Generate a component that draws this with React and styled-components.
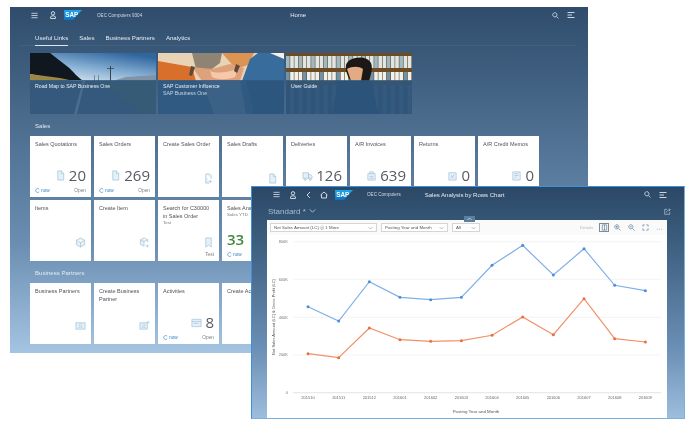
import React from "react";
import styled, { createGlobalStyle } from "styled-components";

const GlobalStyle = createGlobalStyle`
  html, body {
    margin: 0;
    background: #fff;
    font-family: "Liberation Sans", Arial, sans-serif;
  }
`;

const Stage = styled.div`
  position: relative;
  width: 694px;
  height: 443px;
  padding: 7px 0 0 10px;
  box-sizing: border-box;
  overflow: hidden;
  background: #fff;
  filter: blur(0.4px);
`;

const HomeWindow = styled.div`
  width: 578px;
  height: 346px;
  background: linear-gradient(180deg, #2f4c6c 0%, #4a6b8c 32%, #6a8db1 68%, #a4c4e2 100%);
`;

const ShellBar = styled.div`
  height: 16px;
  display: flex;
  align-items: center;
  color: #dfe7ee;
  padding-left: ${(p) => p.$left}px;
`;

const ShellIcon = styled.svg`
  width: ${(p) => p.$size || 8}px;
  height: ${(p) => p.$size || 8}px;
  margin-left: ${(p) => p.$gap || 0}px;
  flex: none;
  fill: none;
  stroke: #dfe7ee;
  stroke-width: 0.9;
`;

const Company = styled.span`
  font-size: 4.6px;
  color: #cfdae4;
  margin-left: ${(p) => p.$left}px;
`;

const ShellTitle = styled.span`
  font-size: 6px;
  color: #e6ecf2;
  margin-left: ${(p) => p.$left}px;
  white-space: nowrap;
`;

const ShellRight = styled.div`
  margin-left: auto;
  margin-right: ${(p) => p.$right}px;
  display: flex;
  align-items: center;
  gap: 8px;
`;

const TabBar = styled.div`
  margin: 8px 12px 0 10px;
  padding-left: 15px;
  height: 15px;
  display: flex;
  gap: 11px;
  box-shadow: inset 0 -1px 0 rgba(255, 255, 255, 0.06);
`;

const Tab = styled.div`
  height: 15px;
  box-sizing: border-box;
  padding-top: 3px;
  font-size: 6.1px;
  line-height: 8px;
  color: #e4ebf2;
  border-bottom: 1px solid ${(p) => (p.$active ? "#dce5ee" : "transparent")};
`;

const Banners = styled.div`
  display: flex;
  gap: 2px;
  margin: 7px 0 0 20px;
`;

const Banner = styled.div`
  position: relative;
  width: 126px;
  height: 61px;
  overflow: hidden;
  background: #365a7e;
`;

const BannerPicture = styled.svg`
  display: block;
  width: 126px;
  height: 61px;
`;

const BannerCaption = styled.div`
  position: absolute;
  left: 0;
  right: 0;
  bottom: 0;
  height: 34px;
  padding: 3px 5px;
  box-sizing: border-box;
  background: rgba(47, 87, 126, 0.84);
  color: #e8eef4;
  font-size: 5.2px;
  line-height: 7px;
`;

const BannerSub = styled.div`
  color: #c7d5e2;
`;

const SectionTitle = styled.div`
  height: ${(p) => p.$height}px;
  padding: ${(p) => p.$top}px 0 0 25px;
  box-sizing: border-box;
  font-size: 6.1px;
  line-height: 8px;
  color: #e2e9f0;
`;

const TileGrid = styled.div`
  display: grid;
  grid-template-columns: repeat(8, 61px);
  grid-auto-rows: 61px;
  gap: 3px;
  margin-left: 20px;
`;

const TileBox = styled.div`
  background: #fff;
  padding: 4px 5px 3px;
  box-sizing: border-box;
  display: flex;
  flex-direction: column;
  color: #4d5358;
  font-size: 5.5px;
  line-height: 8px;
  overflow: hidden;
`;

const TileSub = styled.div`
  font-size: 4.4px;
  line-height: 6px;
  color: #777;
`;

const TileBody = styled.div`
  margin-top: auto;
  display: flex;
  align-items: center;
  justify-content: ${(p) => (p.$left ? "flex-start" : "flex-end")};
  gap: 3px;
`;

const TileValue = styled.span`
  font-family: "Open Sans", sans-serif;
  font-size: 15px;
  line-height: 17px;
  color: ${(p) => (p.$good ? "#3f8a3f" : "#555b61")};
  font-weight: ${(p) => (p.$good ? 600 : 400)};
`;

const TileIcon = styled.svg`
  width: 11px;
  height: 11px;
  flex: none;
  fill: #e6f0f7;
  stroke: #a3c5dd;
  stroke-width: 0.8;
`;

const TileFoot = styled.div`
  height: 7px;
  margin-top: 3px;
  display: flex;
  justify-content: space-between;
  align-items: center;
  font-size: 4.8px;
  line-height: 7px;
  color: #7a8086;
`;

const NowLink = styled.span`
  display: flex;
  align-items: center;
  gap: 1px;
  color: #3b86c4;
`;

const NowMark = styled.svg`
  width: 5px;
  height: 5px;
  fill: none;
  stroke: #3b86c4;
  stroke-width: 0.8;
`;

const ChartWindow = styled.div`
  position: absolute;
  left: 251px;
  top: 186px;
  width: 434px;
  height: 233px;
  box-sizing: border-box;
  border: 1px solid #3d90dc;
  border-bottom-color: #78b0e0;
  border-right-color: #78b0e0;
  background: linear-gradient(180deg, #2b4866 0%, #3d5f80 25%, #6b90b5 70%, #9dbddd 100%);
  display: flex;
  flex-direction: column;
`;

const ChartHeader = styled.div`
  display: flex;
  align-items: center;
  justify-content: space-between;
  height: 18px;
  padding: 0 13px 0 16px;
  font-size: 8px;
  color: #a9bccd;
`;

const StandardLabel = styled.span`
  display: flex;
  align-items: center;
  gap: 3px;
`;

const ShareIcon = styled.svg`
  width: 7px;
  height: 7px;
  fill: none;
  stroke: #b8c8d8;
  stroke-width: 0.8;
`;

const ChartPanel = styled.div`
  position: relative;
  flex: 1;
  margin: 0 17px 0 15px;
  background: #fff;
  display: flex;
  flex-direction: column;
`;

const CollapseHandle = styled.div`
  position: absolute;
  left: 197px;
  top: -4px;
  width: 11px;
  height: 6px;
  background: #5d7f9f;
  display: flex;
  align-items: center;
  justify-content: center;
`;

const ChartToolbar = styled.div`
  height: 15px;
  padding: 3px 3px 0 3px;
  box-sizing: border-box;
  display: flex;
  align-items: flex-start;
  gap: 4px;
  background: #fafafa;
  font-size: 4.4px;
  color: #555;
`;

const SelectBox = styled.div`
  width: ${(p) => p.$width}px;
  height: 9px;
  box-sizing: border-box;
  padding: 0 3px;
  border: 0.5px solid #d5d5d5;
  background: #fff;
  display: flex;
  align-items: center;
  justify-content: space-between;
  white-space: nowrap;
  overflow: hidden;
`;

const Chevron = styled.svg`
  width: ${(p) => p.$size || 5}px;
  height: ${(p) => (p.$size || 5) * 0.8}px;
  flex: none;
  fill: none;
  stroke: ${(p) => p.$color || "#8aa9c2"};
  stroke-width: 0.7;
`;

const ToolActions = styled.div`
  margin-left: auto;
  display: flex;
  align-items: center;
  gap: 3.75px;
  height: 9px;
`;

const ToolLabel = styled.span`
  color: #b4b8bc;
  margin-right: 2px;
`;

const ToolButton = styled.div`
  width: 10px;
  height: 9px;
  display: flex;
  align-items: center;
  justify-content: center;
  box-sizing: border-box;
  border: ${(p) => (p.$active ? "0.6px solid #7f8a94" : "none")};
`;

const ToolIcon = styled.svg`
  width: 7px;
  height: 7px;
  fill: none;
  stroke: #5f7f9c;
  stroke-width: 0.8;
`;

const Plot = styled.svg`
  display: block;
  width: 400px;
  height: 183px;
`;

const ICONS = {
  doc: "M3 1h4l2.5 2.5V11H3z M7 1v3h2.5",
  docPlus: "M3 1h4l2 2v3 M3 1v10h4 M8 7.5v3.5 M6.3 9.2h3.5",
  truck: "M1 3h6v6H1z M7 5h2.5L11 7v2H7z M3.5 9.5a1 1 0 1 0 .1 0 M9 9.5a1 1 0 1 0 .1 0",
  invoice: "M2 4h8v7H2z M4 4V2h4v2 M4 7h4 M4 9h4",
  ret: "M2 3h8v8H2z M5 8l3-3 M5 5.5V8h2.5",
  memo: "M2 2h8v9H2z M4 4h4 M4 6h4 M4 8h2",
  cube: "M6 1l4.5 2.5v5L6 11 1.5 8.5v-5z M1.5 3.5L6 6l4.5-2.5 M6 6v5",
  cubePlus: "M5.5 1L9.5 3v2.5 M5.5 1L1.5 3v5L5.5 10 M1.5 3l4 2 4-2 M5.5 5v5 M9 8v3.5 M7.2 9.8h3.6",
  bookmark: "M3 1h6v10L6 8.8 3 11z",
  person: "M1 3h10v7H1z M6 4.3a1.2 1.2 0 1 0 .1 0 M3.8 9c0-2 4.4-2 4.4 0",
  personPlus: "M1 3h8v7H1z M5 4.3a1.2 1.2 0 1 0 .1 0 M3 9c0-2 4-2 4 0 M10 1v3 M8.5 2.5h3",
  activity: "M1 2.5h10v8H1z M1 5h10 M3 7h5",
};

function Tile({ title, sub, icon, value, good, left, now, info }) {
  return (
    <TileBox>
      <div>{title}</div>
      {sub && <TileSub>{sub}</TileSub>}
      <TileBody $left={left}>
        {icon && (
          <TileIcon viewBox="0 0 12 12">
            <path d={ICONS[icon]} />
          </TileIcon>
        )}
        {value && <TileValue $good={good}>{value}</TileValue>}
      </TileBody>
      <TileFoot>
        {now ? (
          <NowLink>
            <NowMark viewBox="0 0 6 6">
              <path d="M5 1.4A2.4 2.4 0 1 0 5 4.6" />
            </NowMark>
            now
          </NowLink>
        ) : (
          <span />
        )}
        <span>{info}</span>
      </TileFoot>
    </TileBox>
  );
}

function Hamburger() {
  return (
    <ShellIcon viewBox="0 0 8 8" $size={7}>
      <path d="M0.5 1.5h7 M0.5 4h7 M0.5 6.5h7" />
    </ShellIcon>
  );
}

function PersonIcon({ gap }) {
  return (
    <ShellIcon viewBox="0 0 8 8" $gap={gap}>
      <path d="M4 .6a1.6 1.6 0 0 1 0 3.4a1.6 1.6 0 0 1 0-3.4z M1.6 7.5V6c0-1.6 4.8-1.6 4.8 0v1.5z" />
    </ShellIcon>
  );
}

function SearchIcon() {
  return (
    <ShellIcon viewBox="0 0 8 8" $size={7}>
      <path d="M3.2 .8a2.4 2.4 0 1 0 .1 0z M5 5l2.4 2.4" />
    </ShellIcon>
  );
}

function NotifyIcon() {
  return (
    <ShellIcon viewBox="0 0 8 8">
      <path d="M.5 1.5h7 M.5 6.5h7 M.5 4h4.5" />
    </ShellIcon>
  );
}

function SapLogo({ left }) {
  return (
    <svg width="18" height="10" viewBox="0 0 18 10" style={{ marginLeft: left, flex: "none" }}>
      <defs>
        <linearGradient id={`sap${left}`} x1="0" y1="0" x2="0" y2="1">
          <stop offset="0" stopColor="#1fa8ea" />
          <stop offset="1" stopColor="#0a72c4" />
        </linearGradient>
      </defs>
      <polygon points="0,0 18,0 9,10 0,10" fill={`url(#sap${left})`} />
      <text x="1.2" y="7.2" fontSize="6.4" fontWeight="700" fill="#fff" fontFamily="Liberation Sans, sans-serif">
        SAP
      </text>
    </svg>
  );
}

function RoadPicture() {
  return (
    <BannerPicture viewBox="0 0 126 61">
      <defs>
        <linearGradient id="sky" x1="0.1" y1="1" x2="0.75" y2="0">
          <stop offset="0" stopColor="#e6eef2" />
          <stop offset="0.45" stopColor="#8fb6d8" />
          <stop offset="1" stopColor="#2f669e" />
        </linearGradient>
      </defs>
      <rect width="126" height="28" fill="url(#sky)" />
      <path d="M0 0h20c6 5 12 9 18 14 5 4 8 9 14 13H30L0 21z" fill="#10171f" />
      <path d="M0 21l30 4 14 3H0z" fill="#9a8748" />
      <path d="M86 27l10-3 30-2v6H86z" fill="#7f94a6" />
      <path d="M80 13h1v15h-1z M77 15h7v0.7h-7z" fill="#3a444d" />
      <path d="M64 22h1v6h-1z M68 22h1v6h-1z" fill="#7a8a96" />
      <rect y="28" width="126" height="33" fill="#54636f" />
      <path d="M70 28h56v33h-12z" fill="#5d7351" />
      <path d="M53 28l2 0-8 33h-3z" fill="#d9dfe3" />
    </BannerPicture>
  );
}

function HandsPicture() {
  return (
    <BannerPicture viewBox="0 0 126 61">
      <rect width="126" height="28" fill="#e9d3b5" />
      <path d="M34 0h30l-2 10-8 6H38z" fill="#8f8474" />
      <path d="M64 0h32l-6 12-12 4z" fill="#dc9452" />
      <path d="M0 8l34 6 4 14H0z" fill="#d8702c" />
      <path d="M92 6l8-6h18l8 6v22H84z" fill="#376c9d" />
      <path d="M112 0h14v6z" fill="#f4f1ea" />
      <path d="M34 14l20 2 18-5 14 4-4 13H44z" fill="#dda17c" />
      <path d="M52 18c8 3 18 1 28-2l-3 8c-8 3-16 3-23 0z" fill="#f4c8a8" />
      <path d="M33 13l4 1-3 9-3-1z M78 11l4 2-3 7-3-2z" fill="#5d4a3a" />
      <rect y="28" width="126" height="33" fill="#3f6c96" />
      <path d="M44 28h38l6 33H56z" fill="#7e99ad" />
      <path d="M88 28h38v33H96z" fill="#23527e" />
    </BannerPicture>
  );
}

function LibraryPicture() {
  const books = Array.from({ length: 30 }, (_, i) => i * 4.2);
  return (
    <BannerPicture viewBox="0 0 126 61">
      <rect width="126" height="61" fill="#6d4c24" />
      {books.map((x, i) => (
        <g key={x}>
          <rect x={x} y="3" width="3.6" height="12" fill={i % 3 ? "#dfe6e6" : "#9fb9c4"} />
          <rect x={x} y="19" width="3.6" height="9" fill={i % 4 ? "#eef1ee" : "#6f93ab"} />
          <rect x={x} y="32" width="3.6" height="29" fill={i % 2 ? "#4f6f8c" : "#2f4d6a"} />
        </g>
      ))}
      <path d="M60 12c2-8 20-11 25-2 2 5 0 12-2 18H64c-2-5-5-10-4-16z" fill="#1c1816" />
      <path d="M61 16c5-3 12-3 16 0l-2 12H65z" fill="#e2ab84" />
      <path d="M52 28h34l6 33H46z" fill="#24466a" />
    </BannerPicture>
  );
}

function Chart() {
  const xs = Array.from({ length: 12 }, (_, i) => 41 + i * 30.67);
  const blue = [71.7, 86, 46.7, 62.3, 64.7, 62.3, 30.3, 10.3, 40, 13.7, 50.3, 55.7];
  const orange = [118.7, 122.7, 93, 104.7, 106.3, 105.7, 100.3, 82, 99.7, 63.7, 103.7, 107];
  const months = ["201510", "201511", "201512", "201601", "201602", "201603", "201604", "201605", "201606", "201607", "201608", "201609"];
  const grid = [
    ["800K", 6.7],
    ["600K", 44.3],
    ["400K", 82.3],
    ["200K", 120],
  ];
  const line = (ys) => ys.map((y, i) => `${xs[i]},${y}`).join(" ");
  return (
    <Plot viewBox="0 0 400 183" fontFamily="Liberation Sans, sans-serif">
      {grid.map(([label, y]) => (
        <g key={label}>
          <line x1="26" x2="394" y1={y} y2={y} stroke="#efefef" strokeWidth="0.7" />
          <text x="21" y={y + 1.4} fontSize="4" fill="#777" textAnchor="end">
            {label}
          </text>
        </g>
      ))}
      <line x1="26" x2="394" y1="157.7" y2="157.7" stroke="#d8d8d8" strokeWidth="0.7" />
      <text x="21" y="159" fontSize="4" fill="#777" textAnchor="end">
        0
      </text>
      {months.map((m, i) => (
        <text key={m} x={xs[i]} y="164" fontSize="4" fill="#666" textAnchor="middle">
          {m}
        </text>
      ))}
      <text x="209" y="177.5" fontSize="4.4" fill="#555" textAnchor="middle">
        Posting Year and Month
      </text>
      <text transform="translate(8 82) rotate(-90)" fontSize="4" fill="#555" textAnchor="middle">
        Net Sales Amount (LC) &amp; Gross Profit (LC)
      </text>
      <polyline points={line(blue)} fill="none" stroke="#7fb0e6" strokeWidth="1.2" />
      <polyline points={line(orange)} fill="none" stroke="#f0916a" strokeWidth="1.2" />
      {xs.map((x, i) => (
        <g key={x}>
          <circle cx={x} cy={blue[i]} r="1.5" fill="#4a8fdc" />
          <circle cx={x} cy={orange[i]} r="1.5" fill="#e8703a" />
        </g>
      ))}
    </Plot>
  );
}

function SelectChevron() {
  return (
    <Chevron viewBox="0 0 5 4">
      <path d="M.5 1l2 2 2-2" />
    </Chevron>
  );
}

function ToolGlyph({ d }) {
  return (
    <ToolIcon viewBox="0 0 8 8">
      <path d={d} />
    </ToolIcon>
  );
}

export default function App() {
  return (
    <>
      <GlobalStyle />
      <Stage>
        <HomeWindow>
          <ShellBar $left={21}>
            <Hamburger />
            <PersonIcon gap={11} />
            <SapLogo left={7} />
            <Company $left={15}>OEC Computers 9304</Company>
            <ShellTitle $left={148}>Home</ShellTitle>
            <ShellRight $right={13}>
              <SearchIcon />
              <NotifyIcon />
            </ShellRight>
          </ShellBar>
          <TabBar>
            <Tab $active>Useful Links</Tab>
            <Tab>Sales</Tab>
            <Tab>Business Partners</Tab>
            <Tab>Analytics</Tab>
          </TabBar>
          <Banners>
            <Banner>
              <RoadPicture />
              <BannerCaption>Road Map to SAP Business One</BannerCaption>
            </Banner>
            <Banner>
              <HandsPicture />
              <BannerCaption>
                SAP Customer Influence
                <BannerSub>SAP Business One</BannerSub>
              </BannerCaption>
            </Banner>
            <Banner>
              <LibraryPicture />
              <BannerCaption>User Guide</BannerCaption>
            </Banner>
          </Banners>
          <SectionTitle $height={22} $top={8}>Sales</SectionTitle>
          <TileGrid>
            <Tile title="Sales Quotations" icon="doc" value="20" now info="Open" />
            <Tile title="Sales Orders" icon="doc" value="269" now info="Open" />
            <Tile title="Create Sales Order" icon="docPlus" />
            <Tile title="Sales Drafts" icon="doc" />
            <Tile title="Deliveries" icon="truck" value="126" />
            <Tile title="A/R Invoices" icon="invoice" value="639" />
            <Tile title="Returns" icon="ret" value="0" />
            <Tile title="A/R Credit Memos" icon="memo" value="0" />
            <Tile title="Items" icon="cube" />
            <Tile title="Create Item" icon="cubePlus" />
            <Tile title="Search for C30000 in Sales Order" sub="Test" icon="bookmark" info="Test" />
            <Tile title="Sales Analysis" sub="Sales YTD" value="33" good left now />
          </TileGrid>
          <SectionTitle $height={22} $top={8}>Business Partners</SectionTitle>
          <TileGrid>
            <Tile title="Business Partners" icon="person" />
            <Tile title="Create Business Partner" icon="personPlus" />
            <Tile title="Activities" icon="activity" value="8" now info="Open" />
            <Tile title="Create Activity" />
          </TileGrid>
        </HomeWindow>

        <ChartWindow>
          <ShellBar $left={21}>
            <Hamburger />
            <PersonIcon gap={9} />
            <ShellIcon viewBox="0 0 8 8" $gap={8}>
              <path d="M5 1L2 4l3 3" />
            </ShellIcon>
            <ShellIcon viewBox="0 0 8 8" $gap={7}>
              <path d="M.5 4L4 1l3.5 3 M1.5 3.5V7h5V3.5" />
            </ShellIcon>
            <SapLogo left={7} />
            <Company $left={14}>OEC Computers</Company>
            <ShellTitle $left={24}>Sales Analysis by Rows Chart</ShellTitle>
            <ShellRight $right={17}>
              <SearchIcon />
              <NotifyIcon />
            </ShellRight>
          </ShellBar>
          <ChartHeader>
            <StandardLabel>
              Standard *
              <Chevron viewBox="0 0 5 4" $color="#a9bccd" $size={7}>
                <path d="M.5 1l2 2 2-2" />
              </Chevron>
            </StandardLabel>
            <ShareIcon viewBox="0 0 8 8">
              <path d="M6.5 4.5V7.2H.8V1.5h2.7 M3 5c.4-2 1.8-3 4-3 M5.6.8L7.2 2 5.6 3.4" />
            </ShareIcon>
          </ChartHeader>
          <ChartPanel>
            <CollapseHandle>
              <Chevron viewBox="0 0 5 4" $color="#dfe7ee">
                <path d="M.5 3l2-2 2 2" />
              </Chevron>
            </CollapseHandle>
            <ChartToolbar>
              <SelectBox $width={107}>
                <span>Net Sales Amount (LC) ⓧ 1 More</span>
                <SelectChevron />
              </SelectBox>
              <SelectBox $width={67}>
                <span>Posting Year and Month</span>
                <SelectChevron />
              </SelectBox>
              <SelectBox $width={28}>
                <span>All</span>
                <SelectChevron />
              </SelectBox>
              <ToolActions>
                <ToolLabel>Details</ToolLabel>
                <ToolButton $active>
                  <ToolGlyph d="M1.5 1h5v6h-5z M4 1v6" />
                </ToolButton>
                <ToolButton>
                  <ToolGlyph d="M3.2 .8a2.4 2.4 0 1 0 .1 0z M5 5l2.4 2.4 M2 3.2h2.4 M3.2 2v2.4" />
                </ToolButton>
                <ToolButton>
                  <ToolGlyph d="M3.2 .8a2.4 2.4 0 1 0 .1 0z M5 5l2.4 2.4 M2 3.2h2.4" />
                </ToolButton>
                <ToolButton>
                  <ToolGlyph d="M1 3V1h2 M5 1h2v2 M7 5v2H5 M3 7H1V5" />
                </ToolButton>
                <ToolButton>
                  <ToolGlyph d="M1 6h.8 M3.6 6h.8 M6.2 6h.8" />
                </ToolButton>
              </ToolActions>
            </ChartToolbar>
            <Chart />
          </ChartPanel>
        </ChartWindow>
      </Stage>
    </>
  );
}
